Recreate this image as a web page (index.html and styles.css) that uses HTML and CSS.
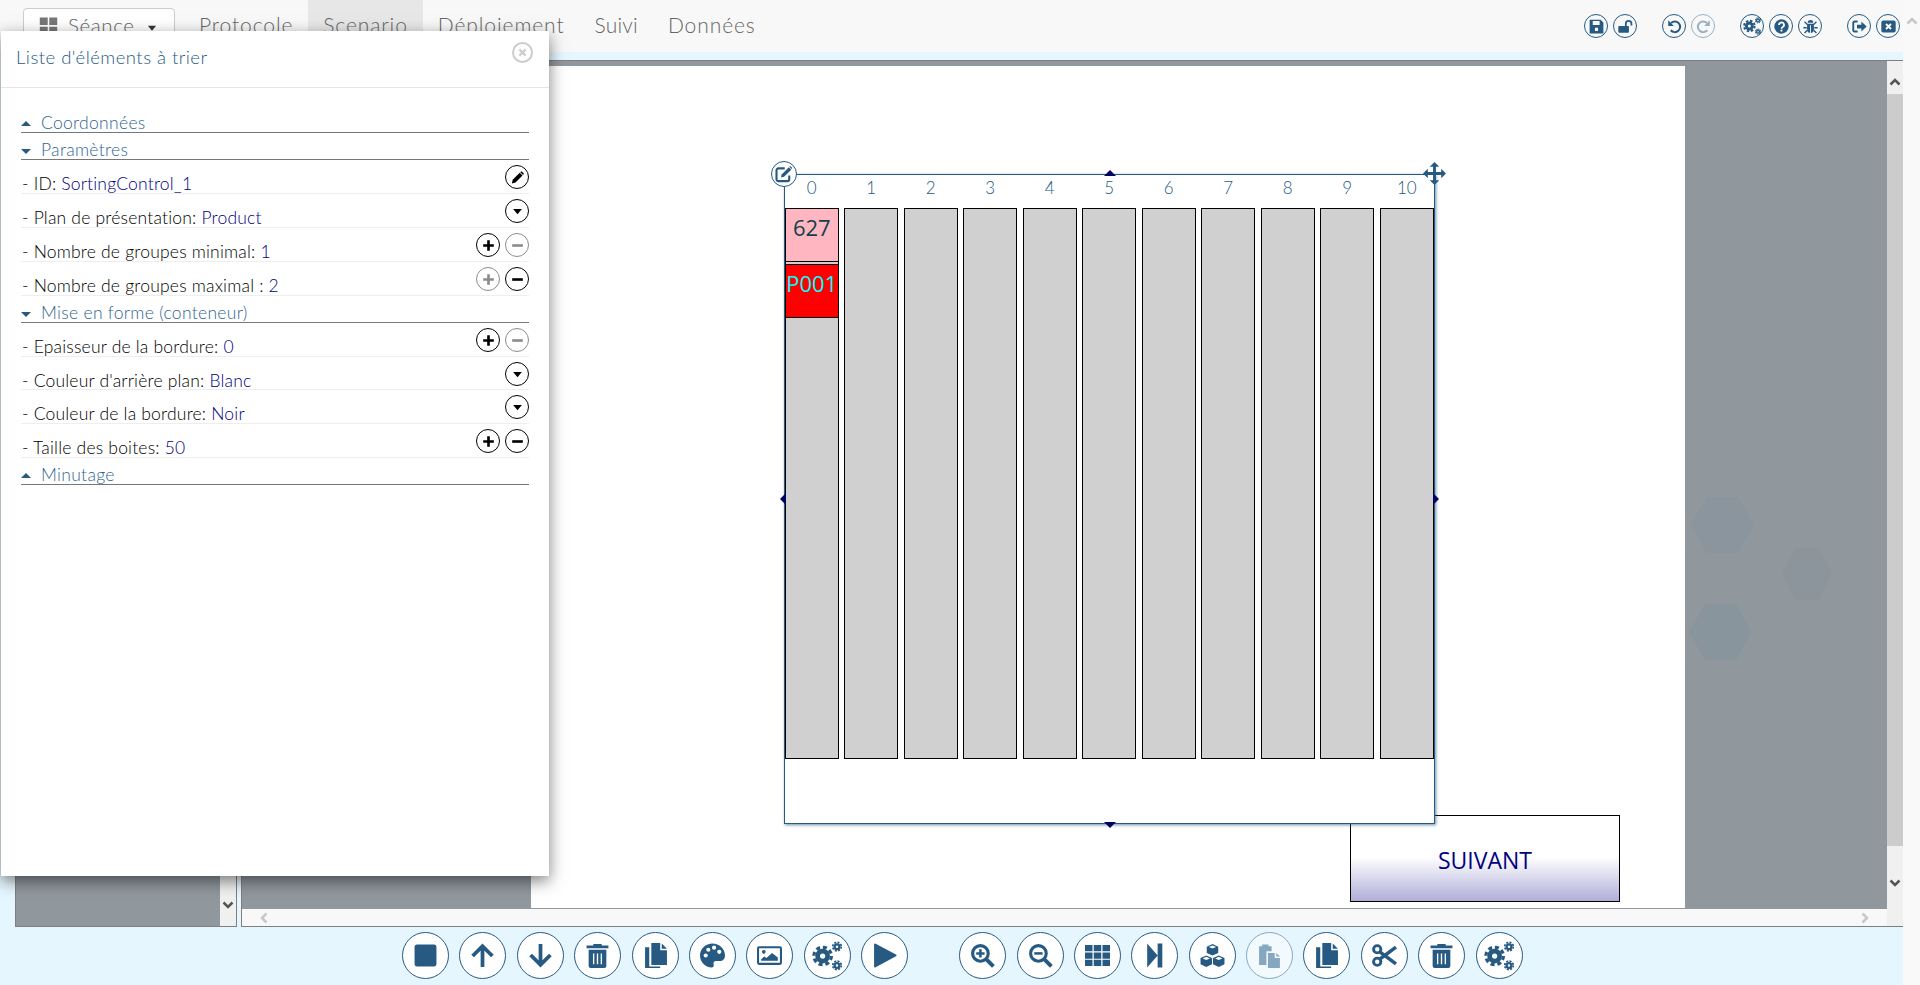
FILE: index.html
```html
<!DOCTYPE html>
<html lang="fr">
<head>
    <meta charset="UTF-8">
    <title>Scenario</title>
    <link rel="stylesheet" href="styles.css">
</head>
<body>
    <!-- icon set -->
    <svg class="icon-defs" xmlns="http://www.w3.org/2000/svg">
        <symbol id="i-stop" viewBox="0 0 24 24"><rect x="1.5" y="1.5" width="21" height="21" rx="2.5"/></symbol>
        <symbol id="i-up" viewBox="0 0 24 24"><path d="M12 23V4M2.5 12.500L12 3l9.500 9.500" fill="none" stroke="currentColor" stroke-width="3.6"/></symbol>
        <symbol id="i-down" viewBox="0 0 24 24"><path d="M12 1v19M2.500 11.500l9.500 9.500 9.500-9.500" fill="none" stroke="currentColor" stroke-width="3.6"/></symbol>
        <symbol id="i-trash" viewBox="0 0 24 24"><path d="M8 2.500V1h8v1.500h6.500V5h-21V2.500zM3.500 6.500h17V22a2 2 0 0 1-2 2h-13a2 2 0 0 1-2-2z"/><path d="M8.300 10v10.500M12 10v10.500M15.700 10v10.500" stroke="#fff" stroke-width="1.3"/></symbol>
        <symbol id="i-files" viewBox="0 0 24 24"><path d="M8 0h8.500v7H23v14H8z"/><path d="M18 0.500L23 5.500h-5z"/><path d="M6 4H2v20h14.500v-1.500H6z"/></symbol>
        <symbol id="i-palette" viewBox="0 0 24 24"><path d="M12 0.500C5.500 0.500 0 5.500 0 12s5.500 11.500 11 11.500c2 0 2.600-1.400 2.100-2.800-.6-1.700.3-3.400 2.300-3.400h3.600c3 0 5-2.100 5-5.300C24 5.500 18.500 0.500 12 0.500z"/><g fill="#fff"><circle cx="5.500" cy="12" r="2"/><circle cx="8" cy="6.500" r="2"/><circle cx="13.500" cy="4.500" r="2"/><circle cx="18.500" cy="8.500" r="2"/></g></symbol>
        <symbol id="i-picture" viewBox="0 0 24 24"><rect x="1" y="4" width="22" height="16" rx="1" fill="none" stroke="currentColor" stroke-width="2"/><circle cx="6.500" cy="8.500" r="1.800"/><path d="M4 17v-1.500l3-2.500 2 1.500 5.500-5 5.500 4.500V17z"/></symbol>
        <symbol id="i-gears" viewBox="0 0 24 24"><g fill="none" stroke="currentColor"><circle cx="8.500" cy="12" r="4" stroke-width="3.8"/><circle cx="8.500" cy="12" r="7" stroke-width="2.6" stroke-dasharray="3.2 2.3"/><circle cx="20" cy="4.500" r="1.900" stroke-width="1.8"/><circle cx="20" cy="4.500" r="3.400" stroke-width="1.4" stroke-dasharray="1.6 1.07"/><circle cx="20" cy="19.500" r="1.900" stroke-width="1.8"/><circle cx="20" cy="19.500" r="3.400" stroke-width="1.4" stroke-dasharray="1.6 1.07"/></g></symbol>
        <symbol id="i-play" viewBox="0 0 24 24"><path d="M2 1.500a1 1 0 0 1 1.500-.8L23 11a1 1 0 0 1 0 1.800L3.500 23.300a1 1 0 0 1-1.500-.8z"/></symbol>
        <symbol id="i-zoomin" viewBox="0 0 24 24"><g fill="none" stroke="currentColor"><circle cx="10" cy="10" r="7.500" stroke-width="3"/><path d="M15.500 15.500L22.500 22.500" stroke-width="3.8"/><path d="M6 10h8M10 6v8" stroke-width="2.4"/></g></symbol>
        <symbol id="i-zoomout" viewBox="0 0 24 24"><g fill="none" stroke="currentColor"><circle cx="10" cy="10" r="7.500" stroke-width="3"/><path d="M15.500 15.500L22.500 22.500" stroke-width="3.8"/><path d="M6 10h8" stroke-width="2.4"/></g></symbol>
        <symbol id="i-grid" viewBox="0 0 24 24"><path d="M0 2h7.200v6H0zM8.400 2h7.200v6H8.400zM16.800 2H24v6h-7.200zM0 9h7.200v6H0zM8.400 9h7.200v6H8.400zM16.800 9H24v6h-7.200zM0 16h7.200v6H0zM8.400 16h7.200v6H8.400zM16.800 16H24v6h-7.200z"/></symbol>
        <symbol id="i-step" viewBox="0 0 24 24"><path d="M5 0.500L15 12 5 23.500zM15 0.500h4.500v23H15z"/></symbol>
        <symbol id="i-cubes" viewBox="0 0 24 24"><path d="M12 1l5.500 2.500v6L12 12 6.500 9.500v-6z"/><path d="M8.500 3.800L12 2.300l3.500 1.500L12 5.300z" fill="#fff"/><path d="M6 12l5.500 2.500v6L6 23 .5 20.500v-6z"/><path d="M2.500 14.800L6 13.300l3.500 1.500L6 16.300z" fill="#fff"/><path d="M18 12l5.500 2.500v6L18 23l-5.500-2.500v-6z"/><path d="M14.500 14.800l3.500-1.500 3.500 1.500-3.500 1.500z" fill="#fff"/></symbol>
        <symbol id="i-paste" viewBox="0 0 24 24"><path d="M2 3h3V1.500h6V3h3v5H9v13H2z"/><path d="M10.500 9.500H17v5h5V24H10.500z"/><path d="M18.500 9.500l3.500 3.500h-3.500z"/></symbol>
        <symbol id="i-scissors" viewBox="0 0 24 24"><g fill="none" stroke="currentColor"><circle cx="5" cy="6" r="3.500" stroke-width="2.8"/><circle cx="5" cy="18" r="3.500" stroke-width="2.8"/><path d="M7.500 8.500L23 20M7.500 15.500L23 4" stroke-width="3.4"/></g></symbol>
        <symbol id="i-save" viewBox="0 0 24 24"><path fill-rule="evenodd" d="M2 1h16.500L23 5.500V23H1V2zM6 3v6.500h11V3zM9.500 14v5h5v-5z"/></symbol>
        <symbol id="i-unlock" viewBox="0 0 24 24"><rect x="0.500" y="11" width="17" height="11" rx="1.500"/><path d="M12.500 12V7.500a4.500 4.500 0 0 1 9 0v3" fill="none" stroke="currentColor" stroke-width="2.8"/></symbol>
        <symbol id="i-undo" viewBox="0 0 24 24"><path d="M6.500 6.500A8.500 8.500 0 1 1 6 18" fill="none" stroke="currentColor" stroke-width="3.2"/><path d="M2 2v9h9z"/></symbol>
        <symbol id="i-redo" viewBox="0 0 24 24"><path d="M17.500 6.500A8.500 8.500 0 1 0 18 18" fill="none" stroke="currentColor" stroke-width="3.2"/><path d="M22 2v9h-9z"/></symbol>
        <symbol id="i-help" viewBox="0 0 24 24"><circle cx="12" cy="12" r="11.500"/><path d="M8 9.500a4 3.800 0 1 1 6 3.200c-1.300.8-2 1.300-2 2.800" fill="none" stroke="#fff" stroke-width="2.8"/><rect x="10.500" y="17" width="3" height="3" fill="#fff"/></symbol>
        <symbol id="i-bug" viewBox="0 0 24 24"><path d="M7.500 6a4.500 4.500 0 0 1 9 0z"/><path d="M6.500 7.500h11V16a5.500 6.500 0 0 1-11 0z"/><path d="M12 10v13" stroke="#fff" stroke-width="1.4"/><path d="M6 14H.5M18 14h5.500M7 9L2.500 4.500M17 9l4.500-4.500M7 18l-4.500 4.500M17 18l4.500 4.500" stroke="currentColor" stroke-width="2.2"/></symbol>
        <symbol id="i-signout" viewBox="0 0 24 24"><path d="M9 4H4.500A2.500 2.500 0 0 0 2 6.500v11A2.500 2.500 0 0 0 4.500 20H9" fill="none" stroke="currentColor" stroke-width="3"/><path d="M8 9h7V4l8.500 8-8.500 8v-5H8z"/></symbol>
        <symbol id="i-winclose" viewBox="0 0 24 24"><rect x="0.500" y="2.500" width="23" height="19" rx="3"/><path d="M8 8l8 8M16 8l-8 8" stroke="#fff" stroke-width="3"/></symbol>
        <symbol id="i-pencil" viewBox="0 0 24 24"><path d="M3 21.500l1.300-6L15.500 4.300l4.500 4.500L8.800 20z"/><path d="M17 2.800a1.700 1.700 0 0 1 2.400 0l2.100 2.100a1.700 1.700 0 0 1 0 2.400l-.6.600-4.500-4.500z"/></symbol>
        <symbol id="i-edit" viewBox="0 0 24 24"><path d="M19 14v5a2.500 2.500 0 0 1-2.500 2.500h-12A2.500 2.500 0 0 1 2 19V7a2.500 2.500 0 0 1 2.500-2.500H13" fill="none" stroke="currentColor" stroke-width="2.8"/><path d="M8 16.500l.8-4L18.500 3l3.200 3.200L12 15.700z"/><path d="M19.500 2a1.200 1.200 0 0 1 1.700 0l1.300 1.300a1.200 1.200 0 0 1 0 1.700l-.3.300-3-3z"/></symbol>
        <symbol id="i-move" viewBox="0 0 24 24"><path d="M12 3v18M3 12h18" fill="none" stroke="currentColor" stroke-width="3"/><path d="M12 0l5 5H7zM12 24l-5-5h10zM0 12l5-5v10zM24 12l-5 5V7z"/></symbol>
        <symbol id="i-caret" viewBox="0 0 24 24"><path d="M5 8h14l-7 8.500z"/></symbol>
        <symbol id="i-plus" viewBox="0 0 24 24"><path d="M12 3.500v17M3.500 12h17" stroke="currentColor" stroke-width="4.2"/></symbol>
        <symbol id="i-minus" viewBox="0 0 24 24"><path d="M3.500 12h17" stroke="currentColor" stroke-width="4.2"/></symbol>
        <symbol id="i-thlarge" viewBox="0 0 24 24"><path d="M1 2h10v9.500H1zM13 2h10v9.500H13zM1 13.500h10V23H1zM13 13.500h10V23H13z"/></symbol>
        <symbol id="i-x" viewBox="0 0 24 24"><path d="M7 7l10 10M17 7L7 17" stroke="currentColor" stroke-width="3.6"/></symbol>
        <symbol id="i-chev-up" viewBox="0 0 24 24"><path d="M3 17l9-9 9 9" fill="none" stroke="currentColor" stroke-width="5"/></symbol>
        <symbol id="i-chev-down" viewBox="0 0 24 24"><path d="M3 7l9 9 9-9" fill="none" stroke="currentColor" stroke-width="5"/></symbol>
        <symbol id="i-chev-left" viewBox="0 0 24 24"><path d="M17 3l-9 9 9 9" fill="none" stroke="currentColor" stroke-width="5"/></symbol>
        <symbol id="i-chev-right" viewBox="0 0 24 24"><path d="M7 3l9 9-9 9" fill="none" stroke="currentColor" stroke-width="5"/></symbol>
    </svg>

    <div class="page">
        <div class="app">
            <nav class="navbar">
                <button class="seance-btn">
                    <svg class="seance-icon"><use href="#i-thlarge"/></svg>
                    Séance
                    <svg class="seance-caret"><use href="#i-caret"/></svg>
                </button>
                <ul class="nav-list">
                    <li class="nav-item">Protocole</li>
                    <li class="nav-item active">Scenario</li>
                    <li class="nav-item">Déploiement</li>
                    <li class="nav-item tight">Suivi</li>
                    <li class="nav-item">Données</li>
                </ul>
                <div class="top-tools">
                    <div class="top-group">
                        <button class="top-btn"><svg><use href="#i-save"/></svg></button>
                        <button class="top-btn"><svg><use href="#i-unlock"/></svg></button>
                    </div>
                    <div class="top-group">
                        <button class="top-btn"><svg><use href="#i-undo"/></svg></button>
                        <button class="top-btn disabled"><svg><use href="#i-redo"/></svg></button>
                    </div>
                    <div class="top-group">
                        <button class="top-btn"><svg class="gears"><use href="#i-gears"/></svg></button>
                        <button class="top-btn"><svg><use href="#i-help"/></svg></button>
                        <button class="top-btn"><svg><use href="#i-bug"/></svg></button>
                    </div>
                    <div class="top-group">
                        <button class="top-btn"><svg><use href="#i-signout"/></svg></button>
                        <button class="top-btn"><svg><use href="#i-winclose"/></svg></button>
                    </div>
                </div>
            </nav>

            <div class="workspace">
                <aside class="side-box">
                    <div class="side-fill"></div>
                    <div class="vscroll side-scroll">
                        <svg class="chev chev-dark"><use href="#i-chev-down"/></svg>
                    </div>
                </aside>

                <main class="main-box">
                    <div class="canvas">
                        <div class="stage">
                            <div class="sort-box">
                                <div class="sort-grid" id="sort-grid"></div>
                                <span class="handle handle-top"></span>
                                <span class="handle handle-left"></span>
                                <span class="handle handle-right"></span>
                                <span class="handle handle-bottom"></span>
                                <button class="edit-btn"><svg><use href="#i-edit"/></svg></button>
                                <svg class="move-icon"><use href="#i-move"/></svg>
                            </div>
                            <div class="next-btn">SUIVANT</div>
                        </div>
                        <svg class="hexes" viewBox="0 0 190 200">
                            <path d="M20 5h31l16 28-16 28H20L4 33z" fill="#7f929d" opacity=".45"/>
                            <path d="M108 56h24l13 25-13 27h-24l-13-27z" fill="#89939c" opacity=".5"/>
                            <path d="M18 112h31l16 28-16 28H18L2 140z" fill="#7f929d" opacity=".55"/>
                        </svg>
                    </div>
                    <div class="vscroll main-vscroll">
                        <svg class="chev chev-dark"><use href="#i-chev-up"/></svg>
                        <div class="thumb"></div>
                        <svg class="chev chev-dark"><use href="#i-chev-down"/></svg>
                    </div>
                    <div class="hscroll">
                        <svg class="chev chev-light"><use href="#i-chev-left"/></svg>
                        <svg class="chev chev-light"><use href="#i-chev-right"/></svg>
                    </div>
                    <div class="scroll-corner"></div>
                </main>
            </div>

            <footer class="toolbar">
                <div class="tool-group">
                    <button class="tool"><svg><use href="#i-stop"/></svg></button>
                    <button class="tool"><svg><use href="#i-up"/></svg></button>
                    <button class="tool"><svg><use href="#i-down"/></svg></button>
                    <button class="tool"><svg><use href="#i-trash"/></svg></button>
                    <button class="tool"><svg><use href="#i-files"/></svg></button>
                    <button class="tool"><svg><use href="#i-palette"/></svg></button>
                    <button class="tool"><svg><use href="#i-picture"/></svg></button>
                    <button class="tool"><svg class="gears"><use href="#i-gears"/></svg></button>
                    <button class="tool"><svg><use href="#i-play"/></svg></button>
                </div>
                <div class="tool-group">
                    <button class="tool"><svg><use href="#i-zoomin"/></svg></button>
                    <button class="tool"><svg><use href="#i-zoomout"/></svg></button>
                    <button class="tool"><svg><use href="#i-grid"/></svg></button>
                    <button class="tool"><svg><use href="#i-step"/></svg></button>
                    <button class="tool"><svg><use href="#i-cubes"/></svg></button>
                    <button class="tool disabled"><svg><use href="#i-paste"/></svg></button>
                    <button class="tool"><svg><use href="#i-files"/></svg></button>
                    <button class="tool"><svg><use href="#i-scissors"/></svg></button>
                    <button class="tool"><svg><use href="#i-trash"/></svg></button>
                    <button class="tool"><svg class="gears"><use href="#i-gears"/></svg></button>
                </div>
            </footer>
        </div>

        <div class="page-scroll">
            <svg class="chev chev-light"><use href="#i-chev-up"/></svg>
        </div>
    </div>

    <!-- properties popup -->
    <div class="panel">
        <div class="panel-header">
            <span class="panel-title">Liste d'éléments à trier</span>
            <button class="panel-close"><svg><use href="#i-x"/></svg></button>
        </div>
        <div class="panel-body">
            <div class="section-title"><span class="tri tri-up"></span>Coordonnées</div>
            <div class="section-title"><span class="tri tri-down"></span>Paramètres</div>
            <div class="prop-row">
                <span>- ID: <b class="val">SortingControl_1</b></span>
                <span class="prop-btns"><button class="round-btn"><svg><use href="#i-pencil"/></svg></button></span>
            </div>
            <div class="prop-row">
                <span>- Plan de présentation: <b class="val">Product</b></span>
                <span class="prop-btns"><button class="round-btn"><svg><use href="#i-caret"/></svg></button></span>
            </div>
            <div class="prop-row">
                <span>- Nombre de groupes minimal: <b class="val">1</b></span>
                <span class="prop-btns"><button class="round-btn"><svg><use href="#i-plus"/></svg></button><button class="round-btn off"><svg><use href="#i-minus"/></svg></button></span>
            </div>
            <div class="prop-row">
                <span>- Nombre de groupes maximal : <b class="val">2</b></span>
                <span class="prop-btns"><button class="round-btn off"><svg><use href="#i-plus"/></svg></button><button class="round-btn"><svg><use href="#i-minus"/></svg></button></span>
            </div>
            <div class="section-title"><span class="tri tri-down"></span>Mise en forme (conteneur)</div>
            <div class="prop-row">
                <span>- Epaisseur de la bordure: <b class="val">0</b></span>
                <span class="prop-btns"><button class="round-btn"><svg><use href="#i-plus"/></svg></button><button class="round-btn off"><svg><use href="#i-minus"/></svg></button></span>
            </div>
            <div class="prop-row short">
                <span>- Couleur d'arrière plan: <b class="val">Blanc</b></span>
                <span class="prop-btns"><button class="round-btn"><svg><use href="#i-caret"/></svg></button></span>
            </div>
            <div class="prop-row">
                <span>- Couleur de la bordure: <b class="val">Noir</b></span>
                <span class="prop-btns"><button class="round-btn"><svg><use href="#i-caret"/></svg></button></span>
            </div>
            <div class="prop-row">
                <span>- Taille des boites: <b class="val">50</b></span>
                <span class="prop-btns"><button class="round-btn"><svg><use href="#i-plus"/></svg></button><button class="round-btn"><svg><use href="#i-minus"/></svg></button></span>
            </div>
            <div class="section-title"><span class="tri tri-up"></span>Minutage</div>
        </div>
    </div>

    <script>
        // Build the 11 sorting columns
        const grid = document.getElementById('sort-grid');
        for (let i = 0; i <= 10; i++) {
            const col = document.createElement('div');
            col.className = 'sort-col';
            let tiles = '';
            if (i === 0) {
                tiles = '<div class="tile tile-pink">627</div><div class="tile tile-red">P001</div>';
            }
            col.innerHTML = `<div class="col-num">${i}</div><div class="col-track">${tiles}</div>`;
            grid.appendChild(col);
        }
    </script>
</body>
</html>
```

FILE: styles.css
```css
* {
    box-sizing: border-box;
}
html, body {
    margin: 0;
    padding: 0;
    height: 985px;
    overflow: hidden;
}
body {
    position: relative;
    font-family: "Lato", "Noto Sans", sans-serif;
    font-weight: 300;
    background-color: #f8f8f8;
    color: #000;
}
button {
    font-family: inherit;
    font-weight: inherit;
    padding: 0;
}
.icon-defs {
    position: absolute;
    width: 0;
    height: 0;
}
.page {
    display: flex;
    height: 985px;
}
.app {
    width: 1903px;
    display: flex;
    flex-direction: column;
    background-color: #e6f6fe;
}
.page-scroll {
    width: 17px;
    background-color: #f9f9f9;
    padding-top: 15px;
}

/* top navigation */
.navbar {
    height: 52px;
    flex: none;
    display: flex;
    background-color: #f8f8f8;
    padding-left: 23px;
}
.seance-btn {
    width: 152px;
    height: 34px;
    margin-top: 8px;
    display: flex;
    align-items: center;
    background-color: #fff;
    border: 1px solid #ccc;
    border-radius: 4px;
    padding-left: 15px;
    color: #666;
    font-size: 20.5px;
    letter-spacing: .6px;
}
.seance-icon {
    width: 19px;
    height: 19px;
    fill: #777;
    margin-right: 10px;
}
.seance-caret {
    width: 14px;
    height: 14px;
    fill: #333;
    margin-left: 10px;
    margin-top: 6px;
}
.nav-list {
    display: flex;
    list-style: none;
    margin: 0 0 0 9px;
    padding: 0;
}
.nav-item {
    padding: 12px 15px 0;
    font-size: 21px;
    letter-spacing: .9px;
    color: #666;
}
.nav-item.tight {
    letter-spacing: .2px;
}
.nav-item.active {
    background-color: #e7e7e7;
}
.top-tools {
    display: flex;
    margin-left: auto;
    padding: 14px 3px 0 0;
    gap: 25px;
}
.top-group {
    display: flex;
    gap: 5px;
}
.top-btn {
    width: 24px;
    height: 24px;
    border: 1.5px solid #265a82;
    border-radius: 50%;
    background-color: transparent;
    color: #265a82;
    display: flex;
    align-items: center;
    justify-content: center;
}
.top-btn svg {
    width: 15px;
    height: 15px;
    fill: currentColor;
}
.top-btn svg.gears {
    width: 18px;
    height: 18px;
}
.top-btn.disabled {
    opacity: .45;
}

/* work area */
.workspace {
    flex: 1;
    display: flex;
    margin-top: 8px;
    min-height: 0;
    padding-left: 15px;
}
.side-box {
    width: 222px;
    display: flex;
    border: 1px solid #7f7f7f;
    border-top: none;
    margin-right: 4px;
}
.side-fill {
    flex: 1;
    background-color: #90979d;
}
.vscroll {
    width: 16px;
    background-color: #f0f0f0;
    display: flex;
    flex-direction: column;
    align-items: center;
}
.side-scroll {
    justify-content: flex-end;
    padding-bottom: 15px;
}
.main-box {
    flex: 1;
    display: grid;
    grid-template-columns: 1fr 16px;
    grid-template-rows: 1fr 17px;
    border-top: 1px solid #7f7f7f;
    border-left: 1px solid #7f7f7f;
    border-bottom: 1px solid #7f7f7f;
    min-height: 0;
}
.canvas {
    position: relative;
    background-color: #90979d;
    padding: 5px 0 0 289px;
    min-height: 0;
}
.stage {
    position: relative;
    z-index: 0;
    width: 1154px;
    height: 842px;
    background-color: #fff;
}
.hexes {
    position: absolute;
    left: 1445px;
    top: 431px;
    width: 190px;
    height: 200px;
    opacity: .75;
    filter: blur(.5px);
}
.main-vscroll {
    padding-top: 15px;
}
.main-vscroll .thumb {
    width: 16px;
    height: 752px;
    margin: 6px 0 31px;
    background-color: #ccc;
}
.hscroll {
    display: flex;
    justify-content: space-between;
    align-items: center;
    background-color: #f8f8f8;
    padding: 0 16px;
}
.scroll-corner {
    background-color: #f0f0f0;
}
.chev {
    width: 12px;
    height: 12px;
    flex: none;
    fill: none;
}
.chev-dark {
    color: #555;
}
.chev-light {
    color: #c8c8c8;
}
.page-scroll .chev {
    display: block;
    margin: 0 auto;
}

/* sorting control on the stage */
.sort-box {
    position: absolute;
    left: 253px;
    top: 108px;
    width: 651px;
    height: 650px;
    background-color: #fff;
    border: 1px solid #265a82;
    box-shadow: 1px 1px 3px rgba(38, 90, 130, .7);
}
.sort-grid {
    display: grid;
    grid-template-columns: repeat(11, 54px);
    column-gap: 5.5px;
    margin-left: -.25px;
}
.col-num {
    height: 33px;
    padding-top: 3px;
    text-align: center;
    font-size: 17px;
    line-height: 20px;
    color: #265a82;
}
.col-track {
    height: 551px;
    background-color: #d0d0d0;
    border: 1px solid #000;
}
.tile {
    height: 53px;
    font-family: "Open Sans", sans-serif;
    font-weight: 400;
    font-size: 22px;
    text-align: center;
    line-height: 36px;
    white-space: nowrap;
    border-bottom: 1px solid #000;
}
.tile-pink {
    background-color: #ffb6c1;
    color: #10404c;
}
.tile-red {
    height: 54px;
    margin-top: 2px;
    border-top: 1px solid #000;
    background-color: #f00;
    color: #0ff;
}
.handle {
    position: absolute;
    width: 0;
    height: 0;
    border: 6px solid transparent;
}
.handle-top {
    top: -11px;
    left: 319px;
    border-bottom-color: #000060;
}
.handle-bottom {
    bottom: -11px;
    left: 319px;
    border-top-color: #000060;
}
.handle-left {
    left: -11px;
    top: 318px;
    border-right-color: #000060;
}
.handle-right {
    right: -11px;
    top: 318px;
    border-left-color: #000060;
}
.edit-btn {
    position: absolute;
    left: -14px;
    top: -14px;
    width: 26px;
    height: 26px;
    border: 1.5px solid #265a82;
    border-radius: 50%;
    background-color: #fff;
    color: #265a82;
    display: flex;
    align-items: center;
    justify-content: center;
}
.edit-btn svg {
    width: 18px;
    height: 18px;
    fill: currentColor;
}
.move-icon {
    position: absolute;
    right: -12px;
    top: -13px;
    width: 23px;
    height: 23px;
    fill: #265a82;
    color: #265a82;
}
.next-btn {
    position: absolute;
    left: 819px;
    top: 749px;
    width: 270px;
    height: 87px;
    z-index: -1;
    border: 1px solid #000;
    background: linear-gradient(to bottom, #fff 48%, #b0aed8 100%);
    color: #000080;
    font-family: "Open Sans", sans-serif;
    font-weight: 400;
    font-size: 23px;
    text-align: center;
    padding-top: 29px;
    line-height: 30px;
}

/* bottom toolbar */
.toolbar {
    flex: none;
    height: 58px;
    display: flex;
    padding: 5px 0 0 402px;
    gap: 51px;
}
.tool-group {
    display: flex;
    gap: 10.4px;
}
.tool {
    width: 47px;
    height: 47px;
    border: 1px solid #265a82;
    border-radius: 50%;
    background-color: #fff;
    color: #265a82;
    display: flex;
    align-items: center;
    justify-content: center;
}
.tool svg {
    width: 25px;
    height: 25px;
    fill: currentColor;
}
.tool svg.gears {
    width: 30px;
    height: 30px;
}
.tool.disabled {
    opacity: .5;
}

/* popup panel */
.panel {
    position: absolute;
    left: 1px;
    top: 31px;
    width: 548px;
    height: 845px;
    background-color: #fff;
    box-shadow: 0 5px 15px rgba(0, 0, 0, .5);
}
.panel-header {
    height: 57px;
    border-bottom: 1px solid #e5e5e5;
    position: relative;
    padding: 15px 0 0 15px;
}
.panel-title {
    font-size: 18.5px;
    letter-spacing: .47px;
    color: #1f5a85;
}
.panel-close {
    position: absolute;
    right: 16px;
    top: 11px;
    width: 21px;
    height: 21px;
    border: 2px solid #ccc;
    border-radius: 50%;
    background-color: #fff;
    color: #ccc;
    display: flex;
    align-items: center;
    justify-content: center;
}
.panel-close svg {
    width: 15px;
    height: 15px;
}
.panel-body {
    padding: 18px 20px 0;
}
.section-title {
    height: 27px;
    padding: 7px 0 0 20px;
    border-bottom: 1px solid #777;
    position: relative;
    font-size: 17.5px;
    line-height: 19px;
    letter-spacing: .3px;
    color: #2f6590;
}
.tri {
    position: absolute;
    left: 0;
    width: 0;
    height: 0;
    border-left: 5px solid transparent;
    border-right: 5px solid transparent;
}
.tri-up {
    top: 15px;
    border-bottom: 5px solid #265a82;
}
.tri-down {
    top: 16px;
    border-top: 5px solid #265a82;
}
.prop-row {
    height: 34px;
    display: flex;
    justify-content: space-between;
    padding: 0 0 0 1px;
    border-bottom: 1px solid #eee;
    font-size: 17.5px;
    line-height: 20px;
    letter-spacing: .2px;
    color: #000;
}
.prop-row.short {
    height: 33px;
}
.prop-row > span:first-child {
    padding-top: 14px;
}
.val {
    font-weight: 300;
    color: #000080;
}
.prop-btns {
    display: flex;
    gap: 5px;
    padding-top: 5px;
}
.round-btn {
    width: 24px;
    height: 24px;
    border: 1.5px solid #000;
    border-radius: 50%;
    background-color: #fff;
    color: #000;
    display: flex;
    align-items: center;
    justify-content: center;
}
.round-btn svg {
    width: 15px;
    height: 15px;
    fill: currentColor;
}
.round-btn.off {
    opacity: .45;
}
```
